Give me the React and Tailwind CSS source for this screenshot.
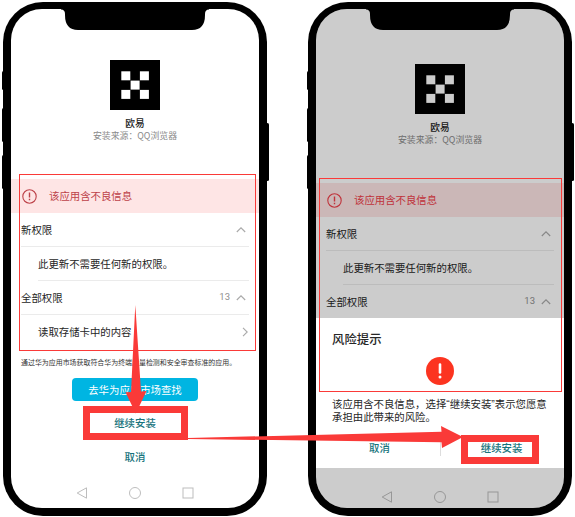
import React from "react";

function Chevron({ right = false }) {
  return (
    <svg width="10" height="10" viewBox="0 0 10 10" fill="none" stroke="#a9a9a9" strokeWidth="1.1">
      {right ? <path d="M3 0.8 7.2 5 3 9.2" /> : <path d="M0.8 7 5 2.8 9.2 7" />}
    </svg>
  );
}

function Logo() {
  return (
    <svg width="50" height="50" viewBox="0 0 50 50" className="block shrink-0">
      <rect width="50" height="50" fill="#000" />
      <g fill="#fff">
        <rect x="11.3" y="11.3" width="9" height="9" />
        <rect x="29.9" y="11.3" width="9" height="9" />
        <rect x="20.6" y="20.6" width="9" height="9" />
        <rect x="11.3" y="29.9" width="9" height="9" />
        <rect x="29.9" y="29.9" width="9" height="9" />
      </g>
    </svg>
  );
}

function NavBar() {
  return (
    <svg width="118" height="14" viewBox="0 0 118 14" fill="none" stroke="#bdbdbd" strokeWidth="1" className="block">
      <path d="M10.5 1.8V12.2L1.2 7Z" strokeLinejoin="round" />
      <circle cx="59" cy="7" r="5.5" />
      <rect x="107" y="2" width="10" height="10" />
    </svg>
  );
}

function Header({ top }) {
  return (
    <div className={"flex flex-col items-center " + top}>
      <Logo />
      <div className="mt-[6px] h-[14px] text-[9.7px] leading-[14px] font-medium text-[#222]">欧易</div>
      <div className="h-3 text-[8.9px] leading-3 text-[#8a8a8a]">安装来源：QQ浏览器</div>
    </div>
  );
}

function Warning({ color }) {
  return (
    <div className={"flex h-[34px] items-center bg-[#fee5e5] pl-[11px] " + color}>
      <svg width="15" height="15" viewBox="0 0 15 15" fill="none" stroke="currentColor">
        <circle cx="7.5" cy="7.5" r="6.7" strokeWidth="1.1" />
        <path d="M7.5 3.6v5" strokeWidth="1.4" />
        <path d="M7.5 9.8v1.4" strokeWidth="1.4" />
      </svg>
      <span className="ml-[12px]">该应用含不良信息</span>
    </div>
  );
}

function Permissions() {
  return (
    <div className="pr-[10px] pl-[10px] text-[#262626]">
      <div className="flex h-[34px] items-center justify-between border-b border-[#ebebeb] pr-[3px]">
        <span>新权限</span>
        <Chevron />
      </div>
      <div className="ml-[17px] flex h-[34px] items-center border-b border-[#ebebeb]">此更新不需要任何新的权限。</div>
      <div className="flex h-[34px] items-center border-b border-[#ebebeb] pr-[3px]">
        <span className="flex-1">全部权限</span>
        <span className="mr-[6px] font-['Roboto','Noto_Sans_CJK_SC',sans-serif] text-[9.5px] text-[#8f8f8f]">13</span>
        <Chevron />
      </div>
    </div>
  );
}

function Phone({ children }) {
  return (
    <div className="relative h-[514px] w-[264px] shrink-0">
      <i className="absolute top-[69px] -left-[1.5px] h-[19px] w-[3px] rounded-sm bg-black" />
      <i className="absolute top-[106px] -left-[1.5px] h-[34px] w-[3px] rounded-sm bg-black" />
      <i className="absolute top-[153px] -left-[1.5px] h-[34px] w-[3px] rounded-sm bg-black" />
      <i className="absolute top-[121px] -right-[1.5px] h-[58px] w-[3px] rounded-sm bg-black" />
      <div className="h-full overflow-hidden rounded-[40px] bg-black px-2 pt-[7px] pb-2">
        <div className="relative flex h-full flex-col overflow-hidden rounded-[31px] bg-white">{children}</div>
      </div>
      <svg className="absolute top-[6px] left-[58px]" width="148" height="23" viewBox="0 0 148 23">
        <path d="M0 0H148V1.5Q144 1.5 144 6V7Q144 22 131 22H17Q4 22 4 7V6Q4 1.5 0 1.5Z" fill="#000" />
      </svg>
    </div>
  );
}

function InstallScreen() {
  return (
    <Phone>
      <Header top="pt-[51px]" />
      <div className="mt-[37px]">
        <Warning color="text-[#bd4249]" />
      </div>
      <Permissions />
      <div className="flex h-[34px] items-center justify-between pr-[9px] pl-[27px] text-[#262626]">
        <span>读取存储卡中的内容</span>
        <Chevron right />
      </div>
      <div className="mt-[7px] h-3 pl-[10px] text-[6.95px] leading-3 whitespace-nowrap text-[#333]">
        通过华为应用市场获取符合华为终端质量检测和安全审查标准的应用。
      </div>
      <button className="mx-auto mt-[10px] h-[23px] w-[126px] rounded-[4px] bg-[#00b5e2] text-[10.4px] leading-[22px] text-white">
        去华为应用市场查找
      </button>
      <button className="mx-auto mt-[14px] h-4 leading-4 font-medium text-[#17737c]">继续安装</button>
      <button className="mx-auto mt-[18px] h-4 leading-4 font-medium text-[#17737c]">取消</button>
      <div className="mt-[21px] flex justify-center">
        <NavBar />
      </div>
    </Phone>
  );
}

function RiskScreen() {
  return (
    <Phone>
      <Header top="pt-[55px]" />
      <div className="mt-[37px]">
        <Warning color="text-[#f0404a]" />
      </div>
      <Permissions />
      <div className="mt-auto mb-[4px] flex justify-center">
        <NavBar />
      </div>
      <div className="absolute inset-0 bg-black/20" />
      <div className="absolute inset-x-0 top-[309px] h-[150px] bg-white pl-4 text-[#262626]">
        <div className="pt-[12px] text-[12.4px] leading-[18px] font-medium">风险提示</div>
        <svg width="28" height="28" viewBox="0 0 28 28" className="mt-[9px] ml-[94px] block">
          <circle cx="14" cy="14" r="14" fill="#fc3420" />
          <path d="M14 7.5v8" stroke="#fff" strokeWidth="2.6" strokeLinecap="round" />
          <circle cx="14" cy="20" r="1.5" fill="#fff" />
        </svg>
        <div className="mt-[13px] font-['Liberation_Sans','Noto_Sans_CJK_SC',sans-serif] leading-[13px] whitespace-nowrap">
          <div>该应用含不良信息，选择“继续安装”表示您愿意</div>
          <div>承担由此带来的风险。</div>
        </div>
        <div className="mt-[16px] flex h-4 items-center font-medium text-[#17737c]">
          <span className="pl-[37px]">取消</span>
          <span className="ml-[50px] h-4 w-px bg-[#ddd]" />
          <span className="ml-[40px]">继续安装</span>
        </div>
      </div>
    </Phone>
  );
}

/* Red boxes and arrows marking the steps to follow. */
function Annotations() {
  return (
    <svg className="pointer-events-none absolute inset-0" width="575" height="517" viewBox="0 0 575 517">
      <g fill="none" stroke="#fa3a38">
        <rect x="19.5" y="174.5" width="236" height="176" />
        <rect x="319.5" y="178.5" width="242" height="213" />
        <rect x="86.5" y="409.5" width="98" height="27" strokeWidth="7" />
        <rect x="464.5" y="438.5" width="71" height="22" strokeWidth="7" />
      </g>
      <g fill="#fa3a38">
        <path d="M135.3 305 141 391.5 146.5 391 135.8 413.5 125.5 392.3 131 392Z" />
        <path d="M188 438 441.5 431.8 441 426 463 437 442 448 441.5 442.3 188 439Z" />
      </g>
    </svg>
  );
}

export default function App() {
  return (
    <div className="relative flex h-[517px] w-[575px] gap-[41px] overflow-hidden bg-white pt-[2px] pl-[3px] font-['Noto_Sans_CJK_SC',sans-serif] text-[10.4px]">
      <InstallScreen />
      <RiskScreen />
      <Annotations />
    </div>
  );
}
